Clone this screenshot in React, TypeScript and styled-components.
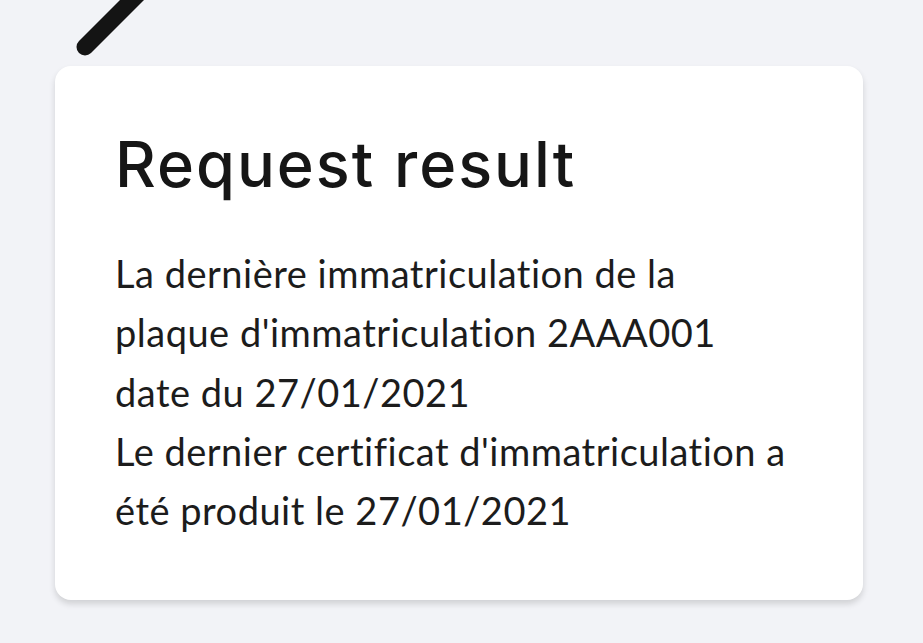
import React from 'react';
import styled, { createGlobalStyle } from 'styled-components';

const Global = createGlobalStyle`
  html, body {
    margin: 0;
    padding: 0;
    background: #f2f3f7;
  }
`;

const Page = styled.div`
  position: relative;
  width: 923px;
  height: 643px;
  overflow: hidden;
  background: #f2f3f7;
  padding: 66px 60px 0 55px;
  box-sizing: border-box;
`;

const Stroke = styled.svg`
  position: absolute;
  left: 70px;
  top: -20px;
`;

const Card = styled.div`
  background: #ffffff;
  border-radius: 16px;
  box-shadow: 0 4px 6px rgba(0, 0, 0, 0.14);
  padding: 60px 30px 54px 60px;
  height: 534px;
  box-sizing: border-box;
`;

const Title = styled.h1`
  margin: 0 0 42px;
  font-family: Inter, "Noto Sans", sans-serif;
  font-weight: 500;
  font-size: 63px;
  line-height: 76px;
  color: #161616;
  letter-spacing: 2px;
`;

const Body = styled.p`
  margin: 0;
  font-family: Lato, "Noto Sans", sans-serif;
  font-size: 38px;
  line-height: 59.3px;
  letter-spacing: 0.5px;
  color: #1c1c1c;
  font-variant-ligatures: none;
`;

export default function App() {
  return (
    <Page>
      <Global />
      <Stroke width="100" height="90" viewBox="0 0 100 90">
        <line x1="15" y1="67" x2="82" y2="0" stroke="#141414" strokeWidth="17" strokeLinecap="round" />
      </Stroke>
      <Card>
        <Title>Request result</Title>
        <Body>
          La dernière immatriculation de la
          <br />
          plaque d'immatriculation 2AAA001
          <br />
          date du 27/01/2021
          <br />
          Le dernier certificat d'immatriculation a
          <br />
          été produit le 27/01/2021
        </Body>
      </Card>
    </Page>
  );
}
